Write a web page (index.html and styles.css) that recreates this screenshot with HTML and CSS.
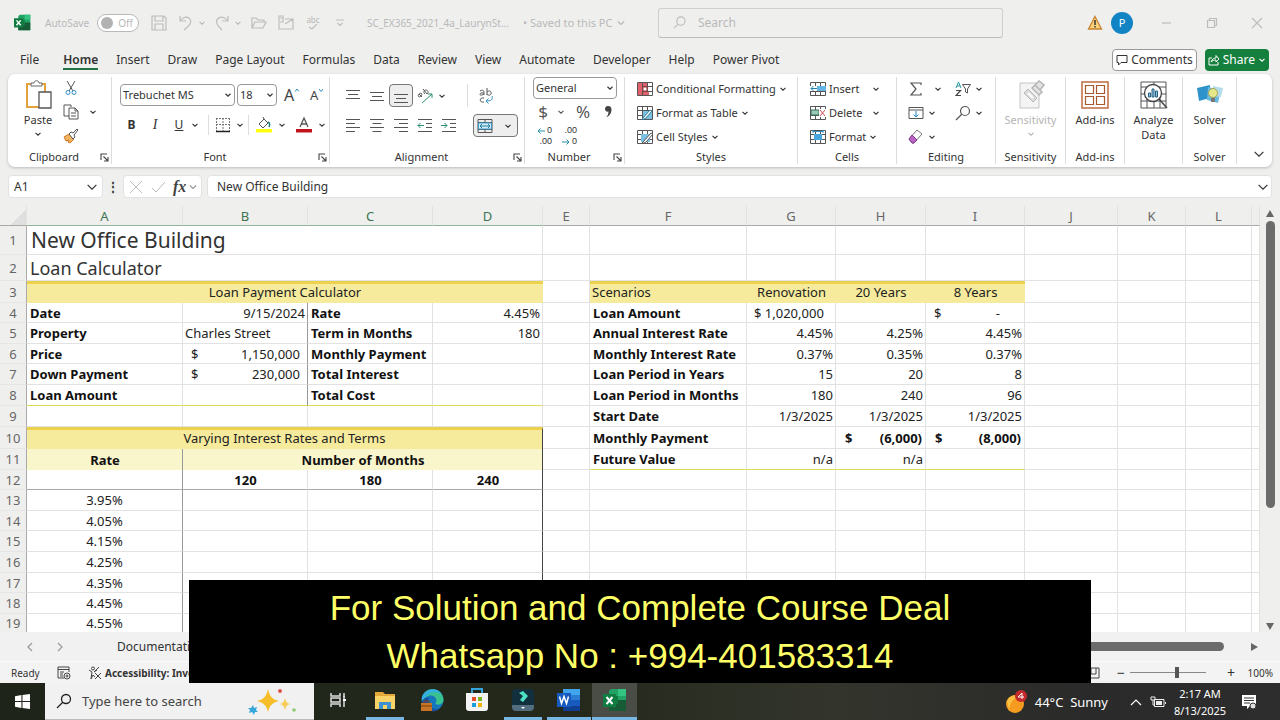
FILE: index.html
```html
<!DOCTYPE html>
<html lang="en">
<head>
<meta charset="utf-8">
<title>Loan Calculator - Excel</title>
<link rel="stylesheet" href="styles.css">
</head>
<body>
<svg class="defs" aria-hidden="true">
  <symbol id="chev" viewBox="0 0 8 8"><path d="M1.5 2.8 4 5.2 6.5 2.8" fill="none" stroke="currentColor"/></symbol>
  <symbol id="launch" viewBox="0 0 9 9"><path d="M1 7V1h6M3.500 3.500 8 8M8 4v4H4" fill="none" stroke="#444" stroke-width="1.100"/></symbol>
  <symbol id="grid" viewBox="0 0 16 14"><path d="M.5.5h15v13H.5zM.5 4.500h15M.5 9.500h15M5.500.5v13M10.500.5v13" fill="#fff" stroke="#555"/></symbol>
  <symbol id="excel" viewBox="0 0 24 24"><path d="M8 1h15v22H6V3z" fill="#21a366"/><path d="M15 1h8v7h-8z" fill="#33c481"/><path d="M6 8h9v8H6z" fill="#107c41"/><path d="M15 12h8v11H6v-7h9z" fill="#185c37"/><path d="M0 6h13v13H0z" fill="#107c41"/><path d="m3.500 9 6 7m0-7-6 7" stroke="#fff" stroke-width="2" fill="none"/></symbol>
</svg>

<header class="titlebar">
  <div class="quick">
    <svg class="i17"><use href="#excel"/></svg>
    <span class="autosave" id="as">AutoSave</span>
    <button class="toggle" aria-labelledby="as"><i></i>Off</button>
    <button aria-label="Save"><svg class="i16" viewBox="0 0 16 16"><path d="M1 1h12l2 2v12H1zM4 1v5h8V1M4 15V9h8v6"/></svg></button>
    <span class="pair"><button aria-label="Undo"><svg class="i16" viewBox="0 0 16 16"><path d="M2 1v5h6M2 6c4-5 8-4.500 10-2 2 3 1 5-6 11"/></svg></button><svg class="c8"><use href="#chev"/></svg></span>
    <span class="pair"><button aria-label="Redo"><svg class="i16" viewBox="0 0 16 16"><path d="M14 1v5H8M14 6C10 1 6 1.500 3.500 4 1 7 3 10 8 15"/></svg></button><svg class="c8"><use href="#chev"/></svg></span>
    <button aria-label="Open"><svg class="i16" viewBox="0 0 16 16"><path d="M1 13V3h4l2 2h6v2M1 13l3-6h11l-3 6z"/></svg></button>
    <button aria-label="Email"><svg class="i16" viewBox="0 0 16 16"><path d="M7 4h8v10H1V8M7 9l8-5M1 1h4v6H1zM2 3h2"/></svg></button>
    <button class="spell" aria-label="Spelling">abc<svg viewBox="0 0 10 6"><path d="m1 3 3 2 5-5"/></svg></button>
    <button aria-label="Customize toolbar"><svg class="i10" viewBox="0 0 10 10"><path d="M1 2h8M2.500 5 5 7.500 7.500 5"/></svg></button>
    <span class="doc">SC_EX365_2021_4a_LaurynSt...</span>
    <span class="saved">• Saved to this PC <svg class="c10"><use href="#chev"/></svg></span>
  </div>
  <label class="search"><svg viewBox="0 0 14 14"><circle cx="8.500" cy="5.500" r="4.500"/><path d="M5 9 1 13"/></svg><input type="search" placeholder="Search" aria-label="Search"></label>
  <div class="window">
    <svg class="i16" viewBox="0 0 16 16"><path d="m8 1.500 6.500 12.500h-13z" fill="#fbd37c" stroke="#c98330" stroke-width="1.300"/><path d="M8 5v5M8 11v1.500" stroke="#333" stroke-width="1.500"/></svg>
    <button class="avatar">P</button>
    <button aria-label="Minimize"><svg class="i12" viewBox="0 0 12 12"><path d="M1 6h9"/></svg></button>
    <button aria-label="Restore"><svg class="i12" viewBox="0 0 12 12"><path d="M1.500 3.500h7v7h-7zM3.500 3.500v-2h7v7h-2"/></svg></button>
    <button aria-label="Close"><svg class="i12" viewBox="0 0 12 12"><path d="m1 1 10 10M11 1 1 11"/></svg></button>
  </div>
</header>

<nav class="tabs">
  <button>File</button><button class="on">Home</button><button>Insert</button><button>Draw</button><button>Page Layout</button><button>Formulas</button><button>Data</button><button>Review</button><button>View</button><button>Automate</button><button>Developer</button><button>Help</button><button>Power Pivot</button>
  <span class="grow"></span>
  <button class="comments"><svg viewBox="0 0 12 12"><path d="M1 1.500h10v7H5l-2.500 2.500V8.500H1z" fill="none" stroke="#333"/></svg>Comments</button>
  <button class="share"><svg viewBox="0 0 12 12"><path d="M4 4H1v7h9V8M3 8c1-3 3-4 5-4V1.500L11 5 8 8V6C6 6 4.500 6.500 3 8z" fill="none" stroke="#fff"/></svg>Share<svg class="c8"><use href="#chev"/></svg></button>
</nav>

<section class="ribbon">
  <div class="group">
    <div class="body clip">
      <button class="big"><svg viewBox="0 0 28 30"><path d="M3 4h18v23H3z" fill="#fff" stroke="#e3a23d" stroke-width="2"/><path d="M7 6V3h3c0-3 5-3 5 0h3v3z" fill="#fff" stroke="#666"/><path d="M15 12h12v16H15z" fill="#fff" stroke="#555" stroke-width="1.300"/></svg>Paste<svg class="c8"><use href="#chev"/></svg></button>
      <div class="stack">
        <button aria-label="Cut"><svg class="i16" viewBox="0 0 16 16"><path d="m4 1 6 10M12 1 6 11" fill="none" stroke="#555"/><circle cx="5" cy="12.500" r="2" fill="none" stroke="#2f8fc4"/><circle cx="11" cy="12.500" r="2" fill="none" stroke="#2f8fc4"/></svg></button>
        <span class="pair"><button aria-label="Copy"><svg class="i16" viewBox="0 0 16 16"><path d="M6 12H1V1h7v2" fill="none" stroke="#555"/><path d="M6 4h6l3 3v8H6zM12 4v3h3M8 9h5M8 12h5" fill="#fff" stroke="#555"/></svg></button><svg class="c8"><use href="#chev"/></svg></span>
        <button aria-label="Format Painter"><svg class="i16" viewBox="0 0 16 16"><path d="m1 9 5-3 5 5-4 4-2-1 1-2-3 1z" fill="#f2b562" stroke="#d1761f"/><path d="m6 6 2-2 2 1 4-4 1 1-4 5 1 2-2 2z" fill="#fff" stroke="#555"/></svg></button>
      </div>
    </div>
    <footer class="more">Clipboard<svg class="launch"><use href="#launch"/></svg></footer>
  </div>

  <div class="group">
    <div class="body two">
      <div class="row font1">
        <select aria-label="Font"><option>Trebuchet MS</option></select>
        <select aria-label="Font size"><option>18</option></select>
        <button class="glyph" aria-label="Increase font size">A<svg viewBox="0 0 6 6"><path d="M1 4.500 3 2l2 2.500" fill="none" stroke="#2f8fc4"/></svg></button>
        <button class="glyph sm" aria-label="Decrease font size">A<svg viewBox="0 0 6 6"><path d="M1 2l2 2.500L5 2" fill="none" stroke="#2f8fc4"/></svg></button>
      </div>
      <div class="row font2">
        <button><b>B</b></button><button class="ital">I</button><button><u>U</u></button><svg class="c8"><use href="#chev"/></svg>
        <button class="sep" aria-label="Borders"><svg class="i16" viewBox="0 0 16 16"><path d="M1 1.500h14M1.500 1v13M14.500 1v13M1 7.500h14M8 1v13" fill="none" stroke="#777" stroke-dasharray="2 1"/><path d="M1 14.500h14" stroke="#222" stroke-width="1.500"/></svg></button><svg class="c8"><use href="#chev"/></svg>
        <button class="sep" aria-label="Fill color"><svg class="i16" viewBox="0 0 16 16"><path d="m3 7 5-5 4 4-5 5zM8 2 7 0" fill="#fff" stroke="#555"/><path d="M12 5c2 1 2 3 1 5" fill="none" stroke="#207f82" stroke-width="1.500"/><path d="M0 12h16v3.500H0z" fill="#ffff14"/></svg></button><svg class="c8"><use href="#chev"/></svg>
        <button aria-label="Font color"><svg class="i16" viewBox="0 0 16 16"><path d="M4 10 8 1l4 9M5.500 7h5" fill="none" stroke="#555" stroke-width="1.300"/><path d="M0 12h16v3.500H0z" fill="#c1121c"/></svg></button><svg class="c8"><use href="#chev"/></svg>
      </div>
    </div>
    <footer class="more">Font<svg class="launch"><use href="#launch"/></svg></footer>
  </div>

  <div class="group">
    <div class="body align">
      <div class="row al">
        <button aria-label="Top align"><svg class="i16" viewBox="0 0 16 16"><path d="M1 2.500h14M3 6.500h10M1 10.500h14"/></svg></button>
        <button aria-label="Middle align"><svg class="i16" viewBox="0 0 16 16"><path d="M1 4.500h14M3 8.500h10M1 12.500h14"/></svg></button>
        <button class="pressed" aria-label="Bottom align"><svg class="i16" viewBox="0 0 16 16"><path d="M1 6.500h14M3 10.500h10M1 14.500h14"/></svg></button>
        <button aria-label="Orientation"><svg class="i16" viewBox="0 0 16 16"><path d="M2 6c2-2 4 0 2 2S0 8 2 6l3 3M6 1l4 5c2-1 1-4-1-4S6 5 8 6"/><path d="m5 15 10-9M11 6h4v4" stroke="#289075"/></svg></button><svg class="c8"><use href="#chev"/></svg>
      </div>
      <button class="wrap" aria-label="Wrap text"><svg class="i16" viewBox="0 0 16 16"><path d="M2 3c4-2 4 0 4 4M6 5C1 4 1 8 4 7l2-1M9 0v7M9 4c2-2 5-1 4 2-1 2-4 1-4 0M6 10c-5-1-5 5 0 4"/><path d="M14 8c1 4-1 5-6 5M10.500 10.500 8 13l2.500 2.500" stroke="#2f8fc4"/></svg></button>
      <div class="row al">
        <button aria-label="Align left"><svg class="i16" viewBox="0 0 16 16"><path d="M1 1.500h14M1 5.500h9M1 9.500h14M1 13.500h9"/></svg></button>
        <button aria-label="Center"><svg class="i16" viewBox="0 0 16 16"><path d="M1 1.500h14M3.500 5.500h9M1 9.500h14M3.500 13.500h9"/></svg></button>
        <button aria-label="Align right"><svg class="i16" viewBox="0 0 16 16"><path d="M1 1.500h14M6 5.500h9M1 9.500h14M6 13.500h9"/></svg></button>
        <button aria-label="Decrease indent"><svg class="i16" viewBox="0 0 16 16"><path d="M1 1.500h14M9 5.500h6M9 9.500h6M1 13.500h14"/><path d="M7 7.500H1M3.500 5 1 7.500 3.500 10" stroke="#289075"/></svg></button>
        <button aria-label="Increase indent"><svg class="i16" viewBox="0 0 16 16"><path d="M1 1.500h14M9 5.500h6M9 9.500h6M1 13.500h14"/><path d="M0 7.500h6M3.500 5 6 7.500 3.500 10" stroke="#289075"/></svg></button>
      </div>
      <button class="merge" aria-label="Merge and center"><svg class="i16" viewBox="0 0 16 16"><path d="M1 1.500h14v13H1zM1 4.500h14M1 11.500h14M8 1.500v3M8 11.500v3"/><path d="M1.500 5h13v6h-13z" fill="#d5eefa" stroke="#3b9ccc"/><path d="M3 8h10M5 6 3 8l2 2M11 6l2 2-2 2" stroke="#1f7c9c"/></svg><svg class="c8"><use href="#chev"/></svg></button>
    </div>
    <footer class="more">Alignment<svg class="launch"><use href="#launch"/></svg></footer>
  </div>

  <div class="group">
    <div class="body num">
      <select aria-label="Number format"><option>General</option></select>
      <div class="row n2"><button>$</button><svg class="c8"><use href="#chev"/></svg><button>%</button><button class="comma" aria-label="Comma style"><svg viewBox="0 0 8 14"><path d="M4 1C1.500 1 1 3 1 4c0 2 2 3 3.500 2.500C4.500 9 3.500 11 2 12.500 6 11 7.500 7.500 7.500 4.500 7.500 2 6 1 4 1z" fill="#444"/></svg></button></div>
      <div class="row n3">
        <button class="dec" aria-label="Increase decimal"><span><svg viewBox="0 0 8 8"><path d="M8 4H1M3.500 1.500 1 4l2.500 2.500"/></svg>0</span><span>.00</span></button>
        <button class="dec" aria-label="Decrease decimal"><span>.00</span><span><svg viewBox="0 0 8 8"><path d="M0 4h7M4.500 1.500 7 4 4.500 6.500"/></svg>0</span></button>
      </div>
    </div>
    <footer class="more">Number<svg class="launch"><use href="#launch"/></svg></footer>
  </div>

  <div class="group">
    <div class="body list">
      <button><svg class="i16" viewBox="0 0 16 14"><use href="#grid"/><path d="M1 1h4v12H1zM6 1h4v3H6zM6 10h6v3H6z" fill="#e0606c"/><path d="M6 5h4v4H6z" fill="#fff" stroke="#a33"/></svg>Conditional Formatting<svg class="c8"><use href="#chev"/></svg></button>
      <button><svg class="i16" viewBox="0 0 16 14"><use href="#grid"/><path d="M6 5h9v8H6z" fill="#7cc0e4"/><path d="m6 12 7-8 2 1-6 7-4 2z" fill="#fff" stroke="#2b7f9e"/></svg>Format as Table<svg class="c8"><use href="#chev"/></svg></button>
      <button><svg class="i16" viewBox="0 0 16 14"><use href="#grid"/><path d="M4 4h9v8H4z" fill="#7cc0e4"/><path d="m6 12 8-9 2 1-7 8-4 2z" fill="#fff" stroke="#555"/></svg>Cell Styles<svg class="c8"><use href="#chev"/></svg></button>
    </div>
    <footer>Styles</footer>
  </div>

  <div class="group">
    <div class="body list">
      <button class="wide"><svg class="i16" viewBox="0 0 16 14"><use href="#grid"/><path d="M5 4h11v5H5z" fill="#64b5e3"/><path d="M0 4h7v5H0z" fill="#fff"/><path d="M7 6.500H1M3.500 4 1 6.500 3.500 9" fill="none" stroke="#237fb0"/></svg><span>Insert</span><svg class="c8"><use href="#chev"/></svg></button>
      <button class="wide"><svg class="i16" viewBox="0 0 16 14"><use href="#grid"/><path d="M1 4h8v5H1z" fill="#98cbb5" stroke="#386b5a"/><path d="M9 3h7v8H9z" fill="#fff"/><path d="m10 4 5 6m0-6-5 6" stroke="#d4474d"/></svg><span>Delete</span><svg class="c8"><use href="#chev"/></svg></button>
      <button><svg class="i16" viewBox="0 0 16 14"><use href="#grid"/><path d="M4 4h8v6H4z" fill="#49a7df"/><path d="M3 0v3M13 0v3M3 1.500h10" stroke="#2f8fc4"/></svg>Format<svg class="c8"><use href="#chev"/></svg></button>
    </div>
    <footer>Cells</footer>
  </div>

  <div class="group">
    <div class="body edit">
      <button class="p1" aria-label="AutoSum"><svg class="i16" viewBox="0 0 16 16"><path d="M13 4V2H3l5 6-5 6h10v-2" fill="none" stroke="#555" stroke-width="1.200"/></svg><svg class="c8"><use href="#chev"/></svg></button>
      <button aria-label="Sort and filter"><svg class="i16" viewBox="0 0 16 16"><path d="m1 7 2.500-6L6 7M2 5h3" fill="none" stroke="#289ba5"/><path d="M1 9.500h4.500L1 14.500h5" fill="none" stroke="#444" stroke-width="1.200"/><path d="M7.500 3.500h8L12.500 8v4l-2-1V8z" fill="none" stroke="#555"/></svg><svg class="c8"><use href="#chev"/></svg></button>
      <button aria-label="Fill"><svg class="i16" viewBox="0 0 16 16"><path d="M1 2.500h14v11H1zM1 5h14" fill="none" stroke="#555"/><path d="M8 6v6M5.500 9.500 8 12l2.500-2.500" fill="none" stroke="#2384b8"/></svg><svg class="c8"><use href="#chev"/></svg></button>
      <button aria-label="Find and select"><svg class="i16" viewBox="0 0 16 16"><circle cx="10" cy="6" r="4.500" fill="none" stroke="#555" stroke-width="1.200"/><path d="m7 9-6 6" stroke="#555" stroke-width="1.200"/></svg><svg class="c8"><use href="#chev"/></svg></button>
      <button aria-label="Clear"><svg class="i16" viewBox="0 0 16 16"><path d="m1 10 8-9 5 4-8 9H4z" fill="#fff" stroke="#777"/><path d="m1 10 3-4 5 5-3 3H4z" fill="#b965c4" stroke="#87358f"/></svg><svg class="c8"><use href="#chev"/></svg></button>
    </div>
    <footer>Editing</footer>
  </div>

  <div class="group">
    <div class="body">
      <button class="big" disabled><svg viewBox="0 0 28 30"><path d="M3 3h19v25H3z" fill="#f4f4f4" stroke="#c4c4c4"/><path d="m7 13 4-4 9 9-4 4z" fill="#ddd" stroke="#b5b5b5"/><path d="m15 8 3-3 7 7-3 3zM18 5l4-4 5 4-4 5" fill="#e3e3e3" stroke="#b5b5b5" stroke-width="1.500"/><path d="m11 13 5 5" stroke="#fff" stroke-width="2"/></svg>Sensitivity<svg class="c8"><use href="#chev"/></svg></button>
    </div>
    <footer>Sensitivity</footer>
  </div>
  <div class="group">
    <div class="body">
      <button class="big"><svg viewBox="0 0 28 30"><path d="M1 2h26v26H1z" fill="#fff" stroke="#c16a43" stroke-width="1.500"/><path d="M4.500 5.500h8v8h-8zM15.500 5.500h8v8h-8zM4.500 16.500h8v8h-8zM15.500 16.500h8v8h-8z" fill="#fff" stroke="#a9572f" stroke-width="1.200"/></svg>Add-ins</button>
    </div>
    <footer>Add-ins</footer>
  </div>
  <div class="group">
    <div class="body">
      <button class="big"><svg viewBox="0 0 28 30"><path d="M1 2h25v26H1zM1 7h25M1 14h25M1 21h25M7 14v14M14 2v26M20 14v14" fill="#fff" stroke="#555"/><circle cx="13" cy="13" r="8.500" fill="#fff" stroke="#444" stroke-width="1.300"/><path d="M8.500 13h2v4h-2zM12 9h2v8h-2zM15.500 11h2v6h-2z" fill="#8cc5e8" stroke="#28607f"/><path d="m19 19 8 9" stroke="#444" stroke-width="1.500"/></svg>Analyze<br>Data</button>
    </div>
    <footer></footer>
  </div>
  <div class="group">
    <div class="body">
      <button class="big"><svg viewBox="0 0 28 30"><path d="m1 8 13-3v13l-11 3z" fill="#2f93cb"/><path d="m12 7 13 3-3 13-11-3z" fill="#6ab9df"/><path d="m17 6 10 2-2 9-8-1z" fill="#b5dcec"/><circle cx="17" cy="13" r="4.500" fill="#e5e78a" stroke="#a5a850"/><path d="M15 18h4v4h-4z" fill="#777"/></svg>Solver</button>
    </div>
    <footer>Solver</footer>
  </div>
  <div class="group last"><button aria-label="Collapse ribbon"><svg class="c14"><use href="#chev"/></svg></button></div>
</section>

<section class="formula">
  <label class="namebox"><input value="A1" aria-label="Name box"><svg class="c14"><use href="#chev"/></svg></label>
  <span class="dots">⋮</span>
  <div class="fx">
    <button aria-label="Cancel"><svg class="i14" viewBox="0 0 14 14"><path d="m1 1 12 12M13 1 1 13" stroke="#bbb" fill="none"/></svg></button>
    <button aria-label="Enter"><svg class="i14" viewBox="0 0 14 14"><path d="m1 8 4 4 9-10" stroke="#bbb" fill="none"/></svg></button>
    <button class="fxi">fx</button><svg class="c10"><use href="#chev"/></svg>
  </div>
  <label class="bar"><input value="New Office Building" aria-label="Formula bar"><svg class="c14"><use href="#chev"/></svg></label>
</section>

<main class="sheet">
  <div class="scroller">
  <table>
    <colgroup><col class="w27"><col class="w156"><col class="w125"><col class="w125"><col class="w110"><col class="w47"><col class="w157"><col class="w89"><col class="w90"><col class="w99"><col class="w93"><col class="w68"><col class="w66"><col></colgroup>
    <thead><tr><th class="corner"></th><th class="sel">A</th><th class="sel">B</th><th class="sel">C</th><th class="sel">D</th><th>E</th><th>F</th><th>G</th><th>H</th><th>I</th><th>J</th><th>K</th><th>L</th><th></th></tr></thead>
    <tbody>
    <tr class="r1"><th>1</th><td colspan="4" class="title">New Office Building</td><td></td><td></td><td></td><td></td><td></td><td></td><td></td><td></td><td></td></tr>
    <tr class="r2"><th>2</th><td colspan="4" class="subtitle">Loan Calculator</td><td></td><td></td><td></td><td></td><td></td><td></td><td></td><td></td><td></td></tr>
    <tr class="h23"><th>3</th><td colspan="4" class="band ctr">Loan Payment Calculator</td><td></td><td class="band">Scenarios</td><td class="band ctr">Renovation</td><td class="band ctr">20 Years</td><td class="band ctr">8 Years</td><td></td><td></td><td></td><td></td></tr>
    <tr class="h20"><th>4</th><td class="b">Date</td><td class="r gl">9/15/2024</td><td class="b">Rate</td><td class="r">4.45%</td><td></td><td class="b">Loan Amount</td><td class="acct0">$ 1,020,000</td><td></td><td><div class="acct dash"><span>$</span><span>-</span></div></td><td></td><td></td><td></td><td></td></tr>
    <tr class="h21"><th>5</th><td class="b">Property</td><td class="gl">Charles Street</td><td class="b">Term in Months</td><td class="r">180</td><td></td><td class="b">Annual Interest Rate</td><td class="r">4.45%</td><td class="r">4.25%</td><td class="r">4.45%</td><td></td><td></td><td></td><td></td></tr>
    <tr class="h20"><th>6</th><td class="b">Price</td><td class="gl"><div class="acct"><span>$</span><span>1,150,000</span></div></td><td class="b">Monthly Payment</td><td></td><td></td><td class="b">Monthly Interest Rate</td><td class="r">0.37%</td><td class="r">0.35%</td><td class="r">0.37%</td><td></td><td></td><td></td><td></td></tr>
    <tr class="h21"><th>7</th><td class="b">Down Payment</td><td class="gl"><div class="acct"><span>$</span><span>230,000</span></div></td><td class="b">Total Interest</td><td></td><td></td><td class="b">Loan Period in Years</td><td class="r">15</td><td class="r">20</td><td class="r">8</td><td></td><td></td><td></td><td></td></tr>
    <tr class="h21"><th>8</th><td class="b yb">Loan Amount</td><td class="gl yb"></td><td class="b yb">Total Cost</td><td class="yb"></td><td></td><td class="b">Loan Period in Months</td><td class="r">180</td><td class="r">240</td><td class="r">96</td><td></td><td></td><td></td><td></td></tr>
    <tr class="h21"><th>9</th><td></td><td></td><td></td><td></td><td></td><td class="b">Start Date</td><td class="r">1/3/2025</td><td class="r">1/3/2025</td><td class="r">1/3/2025</td><td></td><td></td><td></td><td></td></tr>
    <tr class="h22"><th>10</th><td colspan="4" class="band ctr dk">Varying Interest Rates and Terms</td><td></td><td class="b">Monthly Payment</td><td></td><td class="b"><div class="acct tight"><span>$</span><span>(6,000)</span></div></td><td class="b"><div class="acct tight"><span>$</span><span>(8,000)</span></div></td><td></td><td></td><td></td><td></td></tr>
    <tr class="h21"><th>11</th><td class="pale b ctr gl">Rate</td><td colspan="3" class="pale b ctr dk">Number of Months</td><td></td><td class="b yb">Future Value</td><td class="r yb">n/a</td><td class="r yb">n/a</td><td class="yb"></td><td></td><td></td><td></td><td></td></tr>
    <tr class="h20"><th>12</th><td class="gl gb"></td><td class="b ctr gb">120</td><td class="b ctr gb">180</td><td class="b ctr gb dk">240</td><td></td><td></td><td></td><td></td><td></td><td></td><td></td><td></td><td></td></tr>
    <tr class="h21"><th>13</th><td class="ctr gl">3.95%</td><td></td><td></td><td class="dk"></td><td></td><td></td><td></td><td></td><td></td><td></td><td></td><td></td><td></td></tr>
    <tr class="h20"><th>14</th><td class="ctr gl">4.05%</td><td></td><td></td><td class="dk"></td><td></td><td></td><td></td><td></td><td></td><td></td><td></td><td></td><td></td></tr>
    <tr class="h21"><th>15</th><td class="ctr gl">4.15%</td><td></td><td></td><td class="dk"></td><td></td><td></td><td></td><td></td><td></td><td></td><td></td><td></td><td></td></tr>
    <tr class="h21"><th>16</th><td class="ctr gl">4.25%</td><td></td><td></td><td class="dk"></td><td></td><td></td><td></td><td></td><td></td><td></td><td></td><td></td><td></td></tr>
    <tr class="h20"><th>17</th><td class="ctr gl">4.35%</td><td></td><td></td><td class="dk"></td><td></td><td></td><td></td><td></td><td></td><td></td><td></td><td></td><td></td></tr>
    <tr class="h21"><th>18</th><td class="ctr gl">4.45%</td><td></td><td></td><td class="dk"></td><td></td><td></td><td></td><td></td><td></td><td></td><td></td><td></td><td></td></tr>
    <tr class="h19"><th>19</th><td class="ctr gl">4.55%</td><td></td><td></td><td class="dk"></td><td></td><td></td><td></td><td></td><td></td><td></td><td></td><td></td><td></td></tr>
    </tbody>
  </table>
  </div>
  <div class="vscroll"><i class="up"></i><div class="track"><div class="thumb"></div></div><i class="down"></i></div>
</main>

<div class="sheettabs">
  <button aria-label="Previous sheet"><svg viewBox="0 0 8 12"><path d="M6 2 2 6l4 4"/></svg></button>
  <button aria-label="Next sheet"><svg viewBox="0 0 8 12"><path d="m2 2 4 4-4 4"/></svg></button>
  <button class="tab">Documentation</button>
  <div class="hthumb"></div><i class="right"></i>
</div>

<div class="status">
  <span class="ready">Ready</span>
  <svg class="i14" viewBox="0 0 14 14"><path d="M12 6V1H1v11h6M1 3.500h11M3 6h4M3 8h3M3 10h3"/><circle cx="10" cy="10" r="3"/><circle cx="10" cy="10" r="1"/></svg>
  <button class="acc"><svg class="i14" viewBox="0 0 14 14"><circle cx="5" cy="2.500" r="1.500"/><path d="m1 4 3 2-1 7 2-4 2 2M9 4 6 6M11 1 6 6M7 7l6 6M13 7l-6 6"/></svg>Accessibility: Investigate</button>
  <div class="zoom">
    <svg class="i14" viewBox="0 0 14 14"><path d="M1 2h12v10H1zM5 2v6h5V2"/></svg>
    <button aria-label="Zoom out">−</button><input type="range" min="0" max="100" value="62" aria-label="Zoom"><button aria-label="Zoom in">+</button><span class="pct">100%</span>
  </div>
</div>

<aside class="banner">For Solution and Complete Course Deal<br>Whatsapp No : +994-401583314</aside>

<footer class="taskbar">
  <button class="start" aria-label="Start"><svg viewBox="0 0 14 14"><path d="m0 2 6-1v5.500H0zM7 1l7-1v6.500H7zM0 7.500h6V13l-6-1zM7 7.500h7V14l-7-1z" fill="#fff"/></svg></button>
  <label class="tsearch"><svg class="i16" viewBox="0 0 16 16"><circle cx="10" cy="6" r="4.500" fill="none" stroke="#222" stroke-width="1.300"/><path d="m7 9-6 6" stroke="#222" stroke-width="1.300"/></svg><input placeholder="Type here to search" aria-label="Type here to search">
    <svg class="spark" viewBox="0 0 58 28"><path d="M22 2c2 8 4 10 11 12-7 2-9 4-11 11-2-7-4-9-11-11 7-2 9-4 11-12z" fill="#f5bd28"/><path d="M39 11c1 4 2 5 5 6-3 1-4 2-5 6-1-4-2-5-5-6 3-1 4-2 5-6z" fill="#f7cd58"/><path d="m7 18 1 3 3-1-1 3 2 2-3 0-1 3-2-3-3 1 1-3-2-2 3 0z" fill="#35a7d8"/><circle cx="34" cy="4" r="2" fill="#e2574c"/><circle cx="48" cy="23" r="1.800" fill="#8ccb6d"/></svg></label>
  <div class="apps">
    <button class="tv" aria-label="Task view"><svg viewBox="0 0 24 24"><path d="M5 5v3h9V5M5 19v-3h9v3M5 10h9v4H5zM18 5v14M17 8.500h2" fill="none" stroke="#ddd" stroke-width="1.500"/><path d="M17 11h3v2h-3z" fill="#fff"/></svg></button>
    <button class="run" aria-label="File Explorer"><svg viewBox="0 0 24 24"><path d="M2 4h8l2 2h10v15H2z" fill="#e2a83a"/><path d="M2 8h20v13H2z" fill="#f9d367"/><path d="M6 21v-7h12v7h-4v-4h-4v4z" fill="#3f90cf"/></svg></button>
    <button class="edge" aria-label="Edge"><svg viewBox="0 0 24 24"><circle cx="12.500" cy="12" r="11" fill="#1676bd"/><path d="M2 10C4-2 23-2 23.500 12c0 5-8 6-8 3 3-4-2-9-7-7-3 1-5 3-6 6z" fill="#39c18e"/><path d="M2 9C6 0 18-1 22 7c-5-5-15-4-20 8z" fill="#35aee0"/><path d="M9 10c-3 5 1 12 10 11-8 6-18-1-17-8 2-3 4-4 7-3z" fill="#1852a0"/><path d="M1 15h11v8H1z" fill="#c77424"/><path d="M4 15v-2h5v2M1 18h11" fill="none" stroke="#7c3e10"/></svg></button>
    <button aria-label="Store"><svg viewBox="0 0 24 24"><path d="M7 6V1h10v5" fill="none" stroke="#37a5dc" stroke-width="2"/><path d="M1 5h22v15q0 3-3 3H4q-3 0-3-3z" fill="#f3f3f3"/><path d="M7 9h4v4H7z" fill="#e74c2c"/><path d="M13 9h4v4h-4z" fill="#7bb51c"/><path d="M7 15h4v4H7z" fill="#1b9ddd"/><path d="M13 15h4v4h-4z" fill="#f3b30c"/></svg></button>
    <button class="run" aria-label="Filmora"><svg viewBox="0 0 24 24"><rect x="1" y="1" width="22" height="22" rx="4" fill="#112f3d"/><path d="m8 5 4-2 5 5-5 6-3-2 3-4z" fill="#4de0c4"/><path d="M1 17h22v2q0 4-4 4H5q-4 0-4-4z" fill="#536d80"/><path d="m10 19 2 2 2-2z" fill="#fff"/></svg></button>
    <button class="run wd" aria-label="Word"><svg viewBox="0 0 24 24"><path d="M6 1h17v22H6z" fill="#2b7cd3"/><path d="M6 1h17v6H6z" fill="#41a5ee"/><path d="M6 12h17v6H6z" fill="#185abd"/><path d="M6 18h17v5H6z" fill="#103f91"/><path d="M0 5h14v14H0z" fill="#185abd"/><path d="m2.500 8.500 2 7 2.500-7 2.500 7 2-7" fill="none" stroke="#fff" stroke-width="1.500"/></svg></button>
    <button class="run xl" aria-label="Excel"><svg><use href="#excel"/></svg></button>
  </div>
  <div class="tray">
    <svg class="i22" viewBox="0 0 22 24"><circle cx="9" cy="14" r="9" fill="#f49b20"/><path d="M1 11a9 9 0 0 1 12-5c-5 2-9 6-10 14z" fill="#fac043"/><circle cx="15" cy="6" r="6" fill="#c22a2c"/><path d="M16 9V3l-4 4h6" fill="none" stroke="#fff"/></svg>
    <span class="weather">44°C&nbsp; Sunny</span>
    <svg class="i12" viewBox="0 0 12 12"><path d="m1 9 5-5 5 5" fill="none" stroke="#fff" stroke-width="1.200"/></svg>
    <svg class="i16" viewBox="0 0 16 16"><path d="M4.500 5.500H14v7H4.500zM15.500 8v2M1 3h4v3H1zM3 6v5h2" fill="none" stroke="#eee"/><path d="M6 7h6v4H6z" fill="#eee"/></svg>
    <span class="clock">2:17 AM<br>8/13/2025</span>
    <svg class="i16" viewBox="0 0 16 16"><path d="M1 1h14v11H9l-3 3v-3H1z" fill="#fff"/><path d="M3 4h10M3 6.500h10M3 9h6" stroke="#333"/><circle cx="12" cy="12" r="3" fill="#ddd" stroke="#333"/></svg>
  </div>
</footer>
</body>
</html>
```
FILE: styles.css
```css
* { box-sizing: border-box; }
body {
  margin: 0;
  min-height: 100vh;
  display: flex;
  flex-direction: column;
  position: relative;
  background: #efefee;
  color: #333;
  font: 11px/16px "Noto Sans", "Open Sans", sans-serif;
}
button, input, select { font: inherit; color: inherit; }
button { background: none; border: 0; padding: 0; }
input { border: 0; background: none; padding: 0; min-width: 0; outline: 0; }
svg { display: block; flex: none; }
.defs { position: absolute; width: 0; height: 0; }
.grow { flex: 1; }
.c8 { width: 8px; height: 8px; stroke-width: 1.1; }
.c10 { width: 10px; height: 10px; stroke-width: 1; }
.c14 { width: 14px; height: 14px; stroke-width: 0.7; }
.i10 { width: 10px; height: 10px; }
.i12 { width: 12px; height: 12px; }
.i14 { width: 14px; height: 14px; }
.i16 { width: 16px; height: 16px; }
.i17 { width: 17px; height: 17px; }
.i22 { width: 22px; height: 24px; }
.pair { display: flex; align-items: center; gap: 4px; }

/* title bar */
.titlebar { display: grid; grid-template-columns: 658fr 345fr 277fr; align-items: center; height: 45px; color: #b9b9b9; }
.quick { display: grid; grid-template-columns: 31px 52px 54px 27px 36px 37px 27px 28px 29px 32px 156px auto; align-items: center; padding-left: 14px; white-space: nowrap; }
.quick button svg, .window button svg, .search svg { fill: none; stroke: #bdbdbd; stroke-width: 1.2; }
.autosave { font-size: 10px; }
.toggle { display: flex; align-items: center; justify-content: space-between; width: 42px; height: 18px; padding: 0 5px 0 3px; background: #fff; border: 1px solid #b9b9b9; border-radius: 9px; font-size: 10px; }
.toggle i { width: 12px; height: 12px; border-radius: 6px; background: #b2b2b2; }
.spell { display: flex; flex-direction: column; width: 14px; font-size: 8px; line-height: 8px; align-items: center; }
.spell svg { width: 10px; height: 6px; }
.doc { font-size: 10px; }
.saved { display: flex; align-items: center; gap: 4px; font-size: 11px; }
.search { display: flex; align-items: center; gap: 12px; height: 30px; padding-left: 14px; border: 1px solid #cfcfcf; border-bottom-color: #bdbdbd; border-radius: 3px; font-size: 12px; }
.search svg { width: 13px; height: 13px; }
.search input::placeholder { color: #b9b9b9; opacity: 1; }
.window { display: flex; align-items: center; justify-content: flex-end; padding-right: 17px; gap: 33px; }
.window > .i16 { margin-right: -25px; }
.avatar { width: 22px; height: 22px; border-radius: 11px; background: #1284c4; color: #fff; margin-right: -5px; }

/* ribbon tabs */
.tabs { display: flex; align-items: center; height: 29px; padding: 0 11px 0 20px; gap: 18px; font-size: 12px; white-space: nowrap; }
.tabs .on { font-weight: 600; border-bottom: 2px solid #217346; margin-bottom: -2px; margin-left: 6px; }
.comments, .share { display: flex; align-items: center; gap: 3px; height: 22px; padding: 0 3px; border-radius: 4px; }
.comments svg, .share svg { width: 12px; height: 12px; }
.comments { background: #fff; border: 1px solid #999; }
.share { background: #15803d; color: #fff; margin-left: -10px; }
.share .c8 { width: 8px; height: 8px; }

/* ribbon */
.ribbon { display: grid; grid-template-columns: 104fr 218fr 195fr 100fr 173fr 99fr 99fr 70fr 59fr 58fr 54fr 35fr; margin: 0 8px; height: 93px; background: #fff; border-radius: 7px; box-shadow: 0 1px 3px #bbb; }
.group { display: flex; flex-direction: column; margin: 3px 0; border-right: 1px solid #dcdcdc; min-width: 0; white-space: nowrap; }
.group.last { border: 0; align-items: center; justify-content: flex-end; padding: 0 0 3px 9px; }
.body { flex: 1; min-height: 0; }
.group footer { display: flex; justify-content: center; align-items: center; height: 14px; line-height: 14px; position: relative; }
.group .more { padding-right: 11px; }
.launch { position: absolute; right: 2px; top: 3px; width: 9px; height: 9px; }
.row { display: flex; align-items: center; }
.big { display: flex; flex-direction: column; align-items: center; width: 100%; line-height: 15px; padding-top: 3px; }
.big > svg:first-child { width: 28px; height: 30px; margin-bottom: 2px; }
.big .c8 { margin-top: 3px; }
.big:disabled { color: #b5b5b5; }
.clip { display: grid; grid-template-columns: 60px 1fr; }
.clip .stack { display: flex; flex-direction: column; padding-top: 3px; gap: 8px; align-items: flex-start; margin-left: -5px; }
.clip .pair { gap: 10px; }
select { appearance: none; height: 22px; padding: 0 12px 0 2px; border: 1px solid #999; border-radius: 4px; background: #fff url("data:image/svg+xml,%3Csvg xmlns='http://www.w3.org/2000/svg' width='8' height='8'%3E%3Cpath d='M1.500 2.800 4 5.200 6.500 2.800' fill='none' stroke='%23333' stroke-width='1.200'/%3E%3C/svg%3E") no-repeat right 2px center; }
.two { padding: 7px 0 0 8px; }
.font1 { display: grid; grid-template-columns: 115px 40px 20px 16px; column-gap: 2px; align-items: center; margin-bottom: 9px; }
.font1 .glyph { display: flex; font-size: 16px; line-height: 22px; padding-left: 5px; color: #444; }
.font1 .sm { font-size: 13px; padding-left: 9px; }
.glyph svg { width: 6px; height: 6px; margin-top: 3px; }
.font2 { display: grid; grid-template-columns: 23px 24px 24px 17px 28px 12px 30px 12px 28px 10px; height: 20px; font-size: 12px; }
.font2 button { display: grid; place-items: center; height: 20px; }
.font2 .sep { border-left: 1px solid #ddd; }
.font2 .ital { font: italic 14px/20px "Liberation Serif", serif; }
.align { display: grid; grid-template-columns: 137px 1fr; grid-template-rows: 23px 23px; row-gap: 7px; padding-top: 7px; align-items: center; }
.al { display: grid; grid-template-columns: repeat(4, 24px) 24px; padding-left: 11px; height: 23px; }
.al button, .wrap { display: grid; place-items: center; height: 23px; }
.align svg { fill: none; stroke: #555; }
.al .c8 { margin-left: 1px; }
.pressed { border: 1px solid #777; border-radius: 4px; background: #eee; }
.wrap { justify-content: start; padding-left: 10px; border-left: 1px solid #ddd; }
.merge { display: flex; align-items: center; gap: 11px; width: 45px; height: 23px; margin-left: 6px; padding-left: 3px; border: 1px solid #777; border-radius: 4px; background: #eee; }
.num { padding: 0 7px 0 8px; }
.num select { width: 100%; display: block; }
.n2 { display: grid; grid-template-columns: 20px 16px 28px 22px; height: 26px; font-size: 17px; color: #555; }
.n2 .c8 { margin-left: 4px; }
.comma svg { width: 8px; height: 14px; margin: auto; }
.n3 { gap: 8px; padding-left: 2px; }
.dec { display: flex; flex-direction: column; align-items: flex-end; width: 17px; font: 9px/11px "Liberation Sans", Arial, sans-serif; }
.dec span { display: flex; align-items: center; }
.dec svg { width: 8px; height: 8px; margin-right: 2px; fill: none; stroke: #2390a5; }
.list { display: grid; grid-template-rows: repeat(3, 24px); padding-left: 12px; align-items: center; justify-items: start; }
.list button { display: flex; align-items: center; gap: 3px; }
.list .i16 { height: 14px; }
.list .wide span { width: 40px; text-align: left; }
.edit { display: grid; grid-template-columns: 47px 1fr; grid-template-rows: repeat(3, 24px); padding-left: 11px; align-items: center; }
.edit button { display: flex; align-items: center; gap: 4px; }
.edit .p1 { gap: 10px; }

/* formula bar */
.formula { display: flex; align-items: center; height: 23px; margin: 8px; font-size: 12px; }
.namebox, .fx, .bar { display: flex; align-items: center; height: 23px; background: #fff; border: 1px solid #e2e2e2; border-radius: 4px; }
.namebox { width: 95px; padding: 0 3px 0 5px; }
.namebox input, .bar input { flex: 1; }
.dots { width: 20px; text-align: center; font-weight: 700; }
.fx { width: 79px; gap: 8px; padding: 0 2px 0 5px; color: #999; }
.fxi { font: italic 700 16px/20px "Liberation Serif", serif; color: #444; }
.fx .c10 { margin-left: -6px; }
.bar { flex: 1; margin-left: 5px; padding: 0 1px 0 9px; }

/* worksheet */
.sheet { display: flex; height: 426px; }
.scroller { flex: 1; min-width: 0; overflow: hidden; }
table { width: 100%; table-layout: fixed; border-collapse: separate; border-spacing: 0; background: #fff; font-size: 13px; line-height: 18px; white-space: nowrap; }
.w27 { width: 27px; } .w156 { width: 156px; } .w125 { width: 125px; } .w110 { width: 110px; } .w47 { width: 47px; } .w157 { width: 157px; } .w89 { width: 89px; } .w90 { width: 90px; } .w99 { width: 99px; } .w93 { width: 93px; } .w68 { width: 68px; } .w66 { width: 66px; }
th { padding: 0; font-weight: 400; color: #666; background: #efefee; border-right: 1px solid #e2e2e2; }
thead th { height: 20px; border-bottom: 1px solid #aaa; line-height: 18px; }
thead .sel { color: #3d7454; border-bottom-color: #8db59c; }
.corner { background: linear-gradient(135deg, transparent 65%, #dfdfdf 65%) #efefee; }
tbody th { border-right: 1px solid #aaa; border-bottom: 1px solid #e6e6e6; }
td { padding: 0 2px; overflow: hidden; border-right: 1px solid #e2e2e2; border-bottom: 1px solid #e2e2e2; color: #222; }
.r1 > * { height: 29px; }
.r2 > * { height: 26px; }
.h19 > * { height: 18px; }
.h20 > * { height: 20px; }
.h21 > * { height: 21px; }
.h22 > * { height: 22px; }
.h23 > * { height: 22px; }
td.title { font-size: 21px; line-height: 26px; padding-left: 4px; color: #333; }
td.subtitle { font-size: 18px; line-height: 24px; padding-left: 3px; color: #333; }
td.band { background: #f6eb9c; border-top: 3px solid #ebd14c; border-right: 0; border-bottom: 0; line-height: 16px; vertical-align: top; }
td.pale { background: #faf6cc; border-bottom: 0; }
td.b { font-weight: 700; color: #111; padding-left: 3px; }
td.ctr { text-align: center; }
td.r { text-align: right; }
td.gl { border-right: 1px solid #999; }
td.dk { border-right: 1px solid #444; }
td.yb { border-bottom: 1px solid #dcdc55; }
td.gb { border-bottom: 1px solid #aaa; }
.acct { display: flex; justify-content: space-between; padding: 0 5px 0 6px; }
.dash { padding-right: 22px; }
.tight { padding: 0 1px 0 6px; }
td.acct0 { padding-left: 7px; }
.vscroll { width: 20px; display: flex; flex-direction: column; align-items: center; padding: 4px 0 2px; }
.up { border: 4px solid transparent; border-top: 0; border-bottom: 7px solid #666; }
.down { border: 4px solid transparent; border-bottom: 0; border-top: 7px solid #666; }
.track { flex: 1; margin: 4px 0; }
.thumb { width: 9px; height: 72%; border-radius: 5px; background: #6b6b6b; }

/* sheet tabs and status bar */
.sheettabs { display: flex; align-items: center; height: 30px; padding: 0 22px 0 26px; border-bottom: 1px solid #fafafa; background: #f1f1f1; font-size: 12px; }
.sheettabs svg { width: 8px; height: 12px; fill: none; stroke: #999; stroke-width: 1.2; margin-right: 22px; }
.tab { margin-left: 31px; }
.hthumb { width: 400px; height: 9px; margin-left: auto; border-radius: 5px; background: #6b6b6b; }
.right { margin-left: 27px; border: 4px solid transparent; border-right: 0; border-left: 7px solid #666; }
.status { display: flex; align-items: center; height: 21px; padding: 0 7px 0 11px; background: #f3f3f3; font-size: 10px; }
.status svg { fill: none; stroke: #444; }
.ready { width: 46px; }
.acc { display: flex; align-items: center; gap: 3px; margin-left: 17px; font-weight: 700; }
.zoom { display: flex; align-items: center; gap: 5px; margin-left: auto; }
.zoom button { font-size: 14px; }
.zoom > svg { margin-right: 12px; }
.zoom input { appearance: none; width: 76px; height: 14px; margin: 0 16px 0 0; background: linear-gradient(#888, #888) center / 76px 1px no-repeat; }
.zoom input::-webkit-slider-thumb { appearance: none; width: 4px; height: 11px; background: #555; }
.pct { width: 28px; text-align: right; margin-left: 5px; }

/* text band across the lower part */
.banner { position: absolute; left: 189px; right: 189px; bottom: 37px; height: 103px; padding: 4px 0; background: #000; color: #ffff66; text-align: center; font: 35px/48px "Liberation Sans", Arial, sans-serif; white-space: nowrap; }

/* taskbar */
.taskbar { display: flex; height: 37px; background: linear-gradient(90deg, #1e2419 0%, #24291c 45%, #33352c 65%, #2a2a2a 85%, #2d2d2d); color: #fff; }
.start { width: 45px; padding-left: 15px; }
.start svg { width: 15px; height: 15px; }
.tsearch { display: flex; align-items: center; width: 269px; padding: 0 7px 0 11px; gap: 10px; background: #f1f1f1; color: #333; font-size: 13px; border-bottom: 1px solid #bbb; }
.tsearch .i16 { width: 16px; }
.tsearch input { flex: 1; }
.tsearch input::placeholder { color: #444; opacity: 1; }
.spark { width: 58px; height: 28px; margin-left: -10px; margin-right: 3px; }
.apps { display: flex; }
.apps button { display: grid; place-items: center; width: 46px; border-bottom: 3px solid transparent; background-clip: padding-box; }
.apps svg { width: 24px; height: 24px; }
.apps .tv { width: 48px; }
.apps .edge { width: 45px; }
.apps .run { border-bottom-color: #78b6e4; width: 38px; margin: 0 5px 0 4px; }
.apps .wd { width: 44px; margin: 0 1px 0 0; }
.apps .xl { width: 45px; margin: 0; background: #4a4d46; }
.tray { display: flex; align-items: center; margin-left: auto; padding-right: 23px; font-size: 13px; white-space: nowrap; }
.weather { margin: 0 22px 0 7px; }
.tray .i12 { margin-right: 8px; }
.clock { width: 60px; text-align: center; font-size: 11px; line-height: 17px; margin: 0 11px 0 4px; }
```
